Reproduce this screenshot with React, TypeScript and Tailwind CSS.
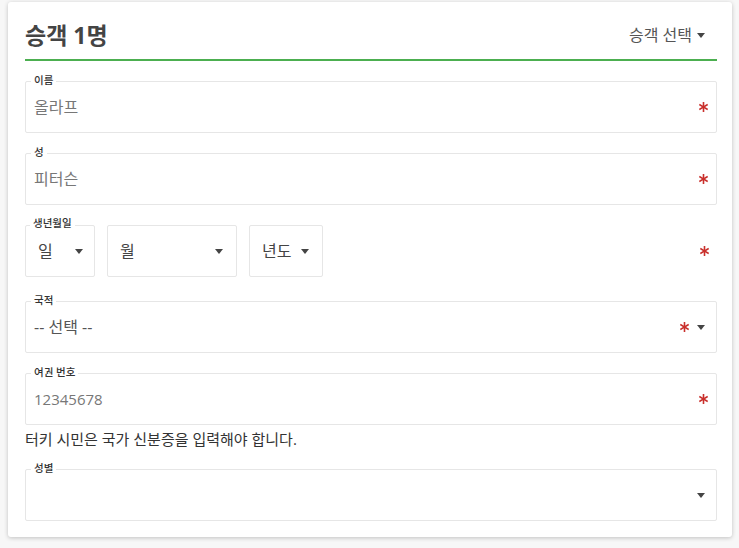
import React from "react";

const FONT = { fontFamily: '"Open Sans", "Noto Sans CJK KR", sans-serif' };

function Caret({ className = "" }: { className?: string }) {
  return (
    <svg width="8" height="5" viewBox="0 0 8 5" className={className}>
      <path d="M0 0 L8 0 L4 5 Z" fill="#444" />
    </svg>
  );
}

function Star({ className = "" }: { className?: string }) {
  return (
    <svg width="9" height="10" viewBox="0 0 9 10" className={className}>
      <g stroke="#c9302c" strokeWidth="1.6" strokeLinecap="butt">
        <path d="M4.5 0 L4.5 10" />
        <path d="M0.3 2.5 L8.7 7.5" />
        <path d="M0.3 7.5 L8.7 2.5" />
      </g>
    </svg>
  );
}

function Legend({ children }: { children: React.ReactNode }) {
  return (
    <span className="absolute left-[5px] top-[-9px] z-10 bg-white px-[3px] text-[10.5px] leading-[14px] font-medium text-[#333]">
      {children}
    </span>
  );
}

function Field({
  label,
  value,
  valueClass = "text-[16px] text-[#777]",
  star = true,
  caret = false,
  className = "",
}: {
  label: string;
  value?: string;
  valueClass?: string;
  star?: boolean;
  caret?: boolean;
  className?: string;
}) {
  return (
    <div
      className={`relative flex h-[52px] items-center rounded-[2px] border border-[#e6e6e6] pl-[8px] ${
        caret ? "pr-[11px]" : "pr-[8px]"
      } ${className}`}
    >
      <Legend>{label}</Legend>
      <span className={`flex-1 ${valueClass}`}>{value}</span>
      {star && <Star />}
      {caret && <Caret className="ml-[8px]" />}
    </div>
  );
}

function DateBox({ value, width, caretGap }: { value: string; width: string; caretGap: string }) {
  return (
    <div className={`flex h-[52px] items-center rounded-[2px] border border-[#e6e6e6] pl-[12px] ${width}`}>
      <span className="text-[16px] text-[#444]">{value}</span>
      <Caret className={caretGap} />
    </div>
  );
}

export default function App() {
  return (
    <div className="min-h-[548px] bg-[#f7f7f7] pt-[2px]" style={FONT}>
      <div className="ml-[8px] w-[724px] rounded-[3px] bg-white pb-[16px] pl-[17px] pr-[15px] shadow-[0_1px_4px_rgba(0,0,0,0.22)]">
        <div className="flex items-center justify-between border-b-2 border-[#4caf50] pb-[10px] pt-[19px]">
          <h2 className="text-[23px] leading-[28px] font-bold text-[#444]">승객 1명</h2>
          <button className="flex items-center gap-[5px] pr-[12px] text-[16px] text-[#555]">
            승객 선택
            <Caret />
          </button>
        </div>

        <Field label="이름" value="올라프" className="mt-[20px]" />
        <Field label="성" value="피터슨" className="mt-[20px]" />

        <div className="relative mt-[20px] flex items-center">
          <Legend>생년월일</Legend>
          <DateBox value="일" width="w-[70px]" caretGap="ml-[22px]" />
          <div className="ml-[12px]" />
          <DateBox value="월" width="w-[130px]" caretGap="ml-[80px]" />
          <div className="ml-[12px]" />
          <DateBox value="년도" width="w-[74px]" caretGap="ml-[10px]" />
          <div className="flex-1" />
          <Star className="mr-[8px]" />
        </div>

        <Field label="국적" value="-- 선택 --" valueClass="text-[16px] text-[#555]" caret className="mt-[24px]" />
        <Field label="여권 번호" value="12345678" valueClass="text-[15px] text-[#777]" className="mt-[20px]" />
        <p className="mt-[4px] text-[15px] leading-[20px] text-[#333]">터키 시민은 국가 신분증을 입력해야 합니다.</p>
        <Field label="성별" star={false} caret className="mt-[20px]" />
      </div>
    </div>
  );
}
